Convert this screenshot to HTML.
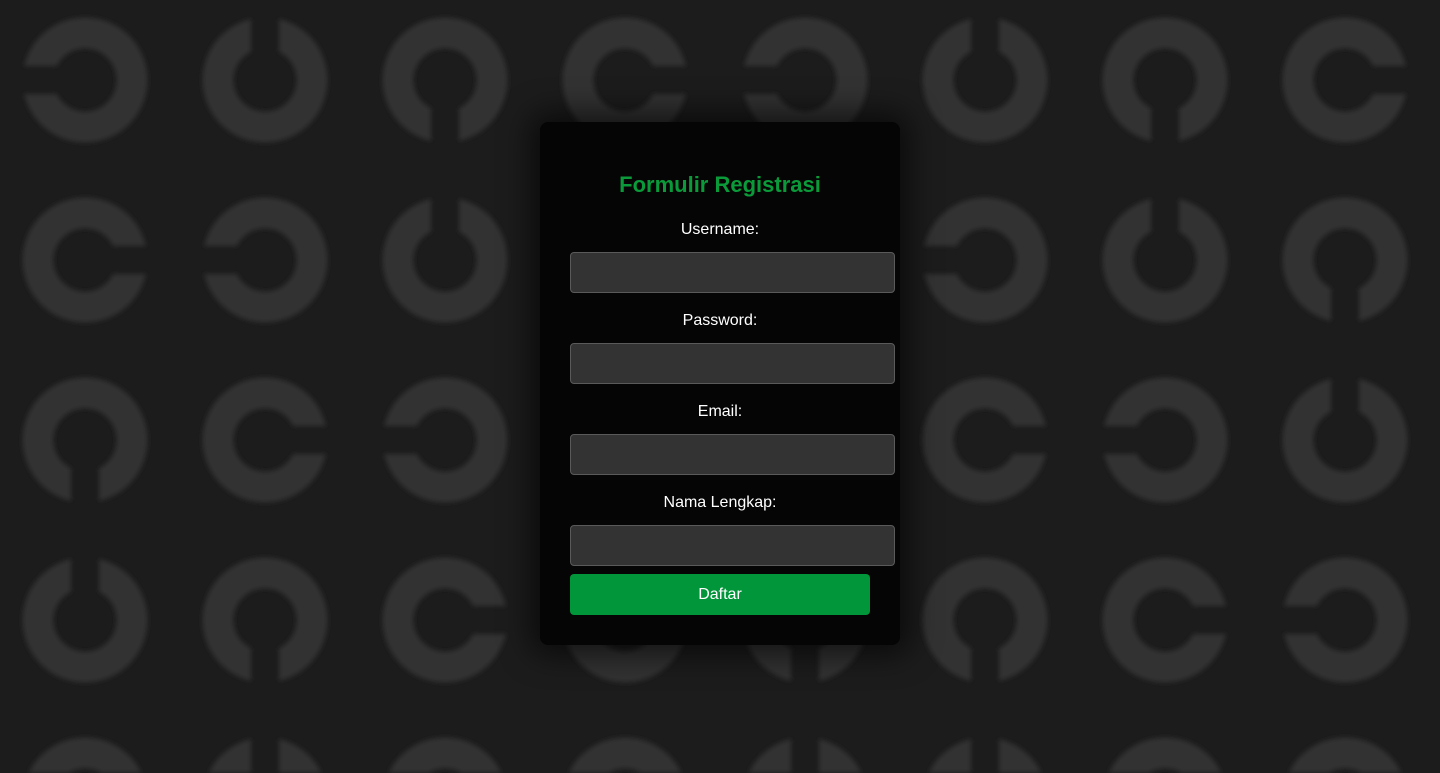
<!DOCTYPE html>
<html><head><meta charset="utf-8"><style>
html,body{margin:0;padding:0;width:1440px;height:773px;overflow:hidden;background:#1c1c1c;font-family:"Liberation Sans",Arial,sans-serif}
svg.bg{position:absolute;left:0;top:0;display:block}
.card{position:absolute;left:540px;top:122px;width:360px;height:523px;background:#050505;border-radius:8px;box-shadow:0 0 30px 10px rgba(0,0,0,0.6)}
h2{position:absolute;width:360px;top:172px;margin:0;text-align:center;color:#0a9a3a;font-size:22px;font-weight:bold}
.lbl{position:absolute;left:540px;width:360px;text-align:center;color:#fff;font-size:16px}
.inp{position:absolute;left:570px;width:323px;height:39px;background:#333;border:1px solid #5a5a5a;border-radius:4px}
.btn{position:absolute;left:570px;top:574px;width:300px;height:41px;background:#009639;border-radius:4px;color:#fff;font-size:16px;text-align:center;line-height:41px}
</style></head><body>
<svg class="bg" width="1440" height="773" id="sv">
</svg>
<script>
var rows=[[80,"LUDRLUDR"],[260,"RLURLLUD"],[440,"DRLRLRLU"],[620,"UDRLDDRL"],[800,"RURLUURL"]];
var xs=[85,265,445,625,805,985,1165,1345],c="",m="";
rows.forEach(function(r){for(var i=0;i<8;i++){var x=xs[i],y=r[0],d=r[1][i];
c+='<circle cx="'+x+'" cy="'+y+'" r="47" fill="none" stroke="#333" stroke-width="31"/>';
var rx,ry,w,h;if(d=="L"){rx=x-70;ry=y-14;w=70;h=28}else if(d=="R"){rx=x;ry=y-14;w=70;h=28}else if(d=="U"){rx=x-14;ry=y-70;w=28;h=70}else{rx=x-14;ry=y;w=28;h=70}
m+='<rect x="'+rx+'" y="'+ry+'" width="'+w+'" height="'+h+'" fill="#000"/>';}});
document.getElementById("sv").innerHTML='<defs><filter id="b" filterUnits="userSpaceOnUse" x="0" y="0" width="1440" height="773"><feGaussianBlur stdDeviation="2.5"/></filter><mask id="mk" maskUnits="userSpaceOnUse" x="0" y="0" width="1440" height="773"><rect width="1440" height="773" fill="#fff"/>'+m+'</mask></defs><g filter="url(#b)"><g mask="url(#mk)">'+c+'</g></g>';
</script>
<div class="card"></div>
<h2 style="left:540px">Formulir Registrasi</h2>
<div class="lbl" style="top:221px">Username:</div>
<div class="inp" style="top:252px"></div>
<div class="lbl" style="top:312px">Password:</div>
<div class="inp" style="top:343px"></div>
<div class="lbl" style="top:403px">Email:</div>
<div class="inp" style="top:434px"></div>
<div class="lbl" style="top:494px">Nama Lengkap:</div>
<div class="inp" style="top:525px"></div>
<div class="btn">Daftar</div>
</body></html>
